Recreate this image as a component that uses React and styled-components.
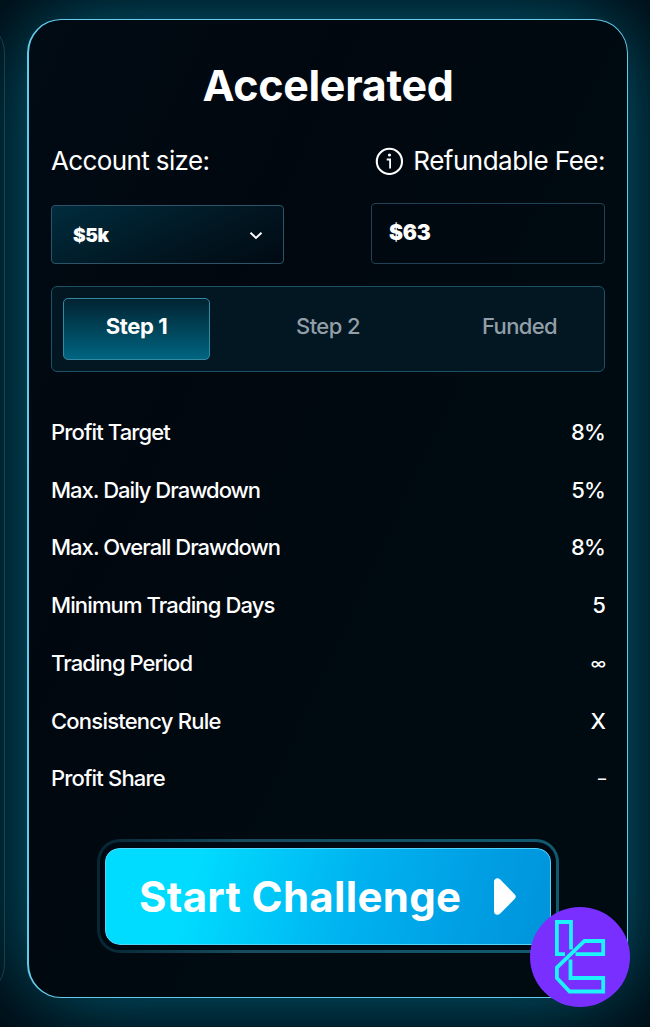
import React from "react";
import styled, { createGlobalStyle } from "styled-components";

const rules = [
  { label: "Profit Target", value: "8%", track: -0.86 },
  { label: "Max. Daily Drawdown", value: "5%", track: -0.99 },
  { label: "Max. Overall Drawdown", value: "8%", track: -0.98 },
  { label: "Minimum Trading Days", value: "5", track: -0.88 },
  { label: "Trading Period", value: "∞", track: -0.92 },
  { label: "Consistency Rule", value: "X", track: -0.78 },
  { label: "Profit Share", value: "–", track: -0.82 },
];

const App = () => {
  return (
    <Page>
      <GlobalStyle />
      <PreviousCard />
      <Card>
        <Title>Accelerated</Title>
        <Labels>
          <Label $track={-0.62}>Account size:</Label>
          <FeeLabel>
            <InfoIcon />
            <Label $track={-0.5}>Refundable Fee:</Label>
          </FeeLabel>
        </Labels>
        <Fields>
          <SizeSelect>
            <SelectValue>$5k</SelectValue>
            <ChevronIcon />
          </SizeSelect>
          <FeeBox>$63</FeeBox>
        </Fields>
        <Steps>
          <Step $active>Step 1</Step>
          <Step>Step 2</Step>
          <Step>Funded</Step>
        </Steps>
        <Rules>
          {rules.map((rule) => (
            <Rule key={rule.label}>
              <RuleText $track={rule.track}>{rule.label}</RuleText>
              <RuleValue $small={rule.value === "∞" || rule.value === "–"}>
                {rule.value}
              </RuleValue>
            </Rule>
          ))}
        </Rules>
        <ButtonFrame>
          <StartButton>
            <ButtonText>Start Challenge</ButtonText>
            <PlayIcon />
          </StartButton>
        </ButtonFrame>
      </Card>
      <Badge>
        <BadgeLogo />
      </Badge>
    </Page>
  );
};

const InfoIcon = () => (
  <svg width="28" height="28" viewBox="0 0 28 28" fill="none" stroke="#fff">
    <circle cx="14.4" cy="14.4" r="12.6" strokeWidth="2.1" />
    <path d="M11.7 12.5H15.1V21.4" strokeWidth="1.8" />
    <circle cx="14.5" cy="8" r="1.6" fill="#fff" stroke="none" />
  </svg>
);

const ChevronIcon = () => (
  <svg width="14" height="10" viewBox="0 0 14 10" fill="none">
    <path d="M1.5 2.7L7 7.9L12.5 2.7" stroke="#fff" strokeWidth="2" />
  </svg>
);

const PlayIcon = () => (
  <svg width="22" height="37" viewBox="0 0 22 37" fill="#fff">
    <path d="M0 3.5C0 0.5 3.6 -0.9 6 1.3L20.6 16.2C22.2 17.8 22.2 19.4 20.6 21L6 35.7C3.6 37.9 0 36.5 0 33.5Z" />
  </svg>
);

const BadgeLogo = () => (
  <svg
    width="100"
    height="100"
    viewBox="0 0 100 100"
    fill="none"
    stroke="#1cf3fb"
    strokeWidth="3.8"
  >
    <path d="M35 47.2H26.9V15H41V42.5" />
    <path d="M45.5 47.2H73.2V34H54.5L26.9 60.6V71L39.6 84.5H73.2V71H40.5V52.5" />
  </svg>
);

const GlobalStyle = createGlobalStyle`
  body {
    margin: 0;
    background: #000910;
  }

  * {
    box-sizing: border-box;
  }
`;

const Page = styled.div`
  position: relative;
  width: 650px;
  height: 1027px;
  padding: 19px 22px 0 27px;
  overflow: hidden;
  color: #fff;
  font-family: Inter, "Liberation Sans", sans-serif;
  background: #000910;
`;

/* right edge of the neighbouring card */
const PreviousCard = styled.div`
  position: absolute;
  z-index: 1;
  top: 19px;
  left: -100px;
  width: 105px;
  height: 979px;
  border: 1px solid rgba(32, 100, 120, 0.5);
  border-radius: 34px;
`;

const Card = styled.div`
  position: relative;
  display: flex;
  flex-direction: column;
  height: 979px;
  padding: 0 22px;
  border: 1px solid #62cbea;
  border-left-width: 2px;
  border-radius: 34px;
  background: linear-gradient(115deg, #010b14, #01070f 30%, #000a11 60%);
  box-shadow: 0 0 96px -2px #006c88;
`;

const Title = styled.h1`
  margin: 39px 0 0;
  font-size: 43px;
  line-height: 52px;
  font-weight: 700;
  letter-spacing: -0.3px;
  text-align: center;
`;

const Labels = styled.div`
  display: flex;
  align-items: center;
  justify-content: space-between;
  height: 32px;
  margin-top: 34px;
`;

const Label = styled.span`
  font-size: 26px;
  line-height: 32px;
  letter-spacing: ${(props) => props.$track}px;
  white-space: nowrap;
`;

const FeeLabel = styled.div`
  display: flex;
  align-items: center;
  gap: 10px;
`;

const Fields = styled.div`
  display: flex;
  align-items: flex-end;
  justify-content: space-between;
  height: 61px;
  margin-top: 26px;
`;

const SizeSelect = styled.div`
  display: flex;
  align-items: center;
  justify-content: space-between;
  width: 233px;
  height: 59px;
  padding: 1px 20px 0 21px;
  border: 1px solid #2b5468;
  border-radius: 4px;
  background: linear-gradient(155deg, #002c3d, #011621 60%, #000a13);
`;

const SelectValue = styled.span`
  font-size: 19px;
  font-weight: 900;
  letter-spacing: -0.4px;
`;

const FeeBox = styled.div`
  width: 234px;
  height: 61px;
  padding-left: 17px;
  border: 1px solid #1f4256;
  border-radius: 4px;
  font-size: 21px;
  line-height: 57px;
  font-weight: 900;
  letter-spacing: -0.2px;
`;

const Steps = styled.div`
  display: flex;
  justify-content: space-between;
  height: 86px;
  margin-top: 22px;
  padding: 11px;
  border: 1px solid #1b5268;
  border-radius: 6px;
  background: #021722;
`;

const Step = styled.div`
  width: 147px;
  height: 62px;
  border: 1px solid ${(props) => (props.$active ? "#3389a2" : "transparent")};
  border-radius: 5px;
  background: ${(props) =>
    props.$active ? "linear-gradient(#012331, #006581)" : "transparent"};
  color: ${(props) => (props.$active ? "#fff" : "#929fa9")};
  font-size: 22px;
  line-height: 54px;
  font-weight: ${(props) => (props.$active ? 700 : 500)};
  letter-spacing: ${(props) => (props.$active ? -0.4 : -0.6)}px;
  text-align: center;
`;

const Rules = styled.div`
  display: flex;
  flex-direction: column;
  margin-top: 31px;
`;

const Rule = styled.div`
  display: flex;
  align-items: center;
  justify-content: space-between;
  height: 57.75px;
`;

const RuleText = styled.span`
  font-size: 22px;
  line-height: 28px;
  font-weight: 450;
  letter-spacing: ${(props) => props.$track}px;
  white-space: nowrap;
`;

const RuleValue = styled.span`
  font-size: ${(props) => (props.$small ? 16 : 22)}px;
  line-height: 28px;
  font-weight: 500;
  letter-spacing: -0.9px;
`;

const ButtonFrame = styled.div`
  align-self: flex-start;
  width: 462px;
  height: 114px;
  margin: 32px 0 0 46px;
  padding: 3px;
  border-radius: 23px;
  background: linear-gradient(90deg, #062633, #174a5c 30%, #125a70);
`;

const StartButton = styled.div`
  display: flex;
  align-items: center;
  justify-content: space-between;
  width: 456px;
  height: 108px;
  padding: 0 35px 0 34px;
  border: 5px solid #000911;
  border-top-width: 6px;
  border-radius: 20px;
  background:
    linear-gradient(105deg, #00dcff 20%, #00b3f0 55%, #009fe4 80%, #0093da)
      padding-box,
    #000911 border-box;
  box-shadow: inset 0 0 0 1px #56d4f8;
`;

const ButtonText = styled.span`
  font-size: 42px;
  line-height: 52px;
  font-weight: 700;
  letter-spacing: 0.3px;
  white-space: nowrap;
`;

const Badge = styled.div`
  position: absolute;
  top: 907px;
  left: 530px;
  width: 100px;
  height: 100px;
  border-radius: 50%;
  background: #792fff;
`;

export default App;
